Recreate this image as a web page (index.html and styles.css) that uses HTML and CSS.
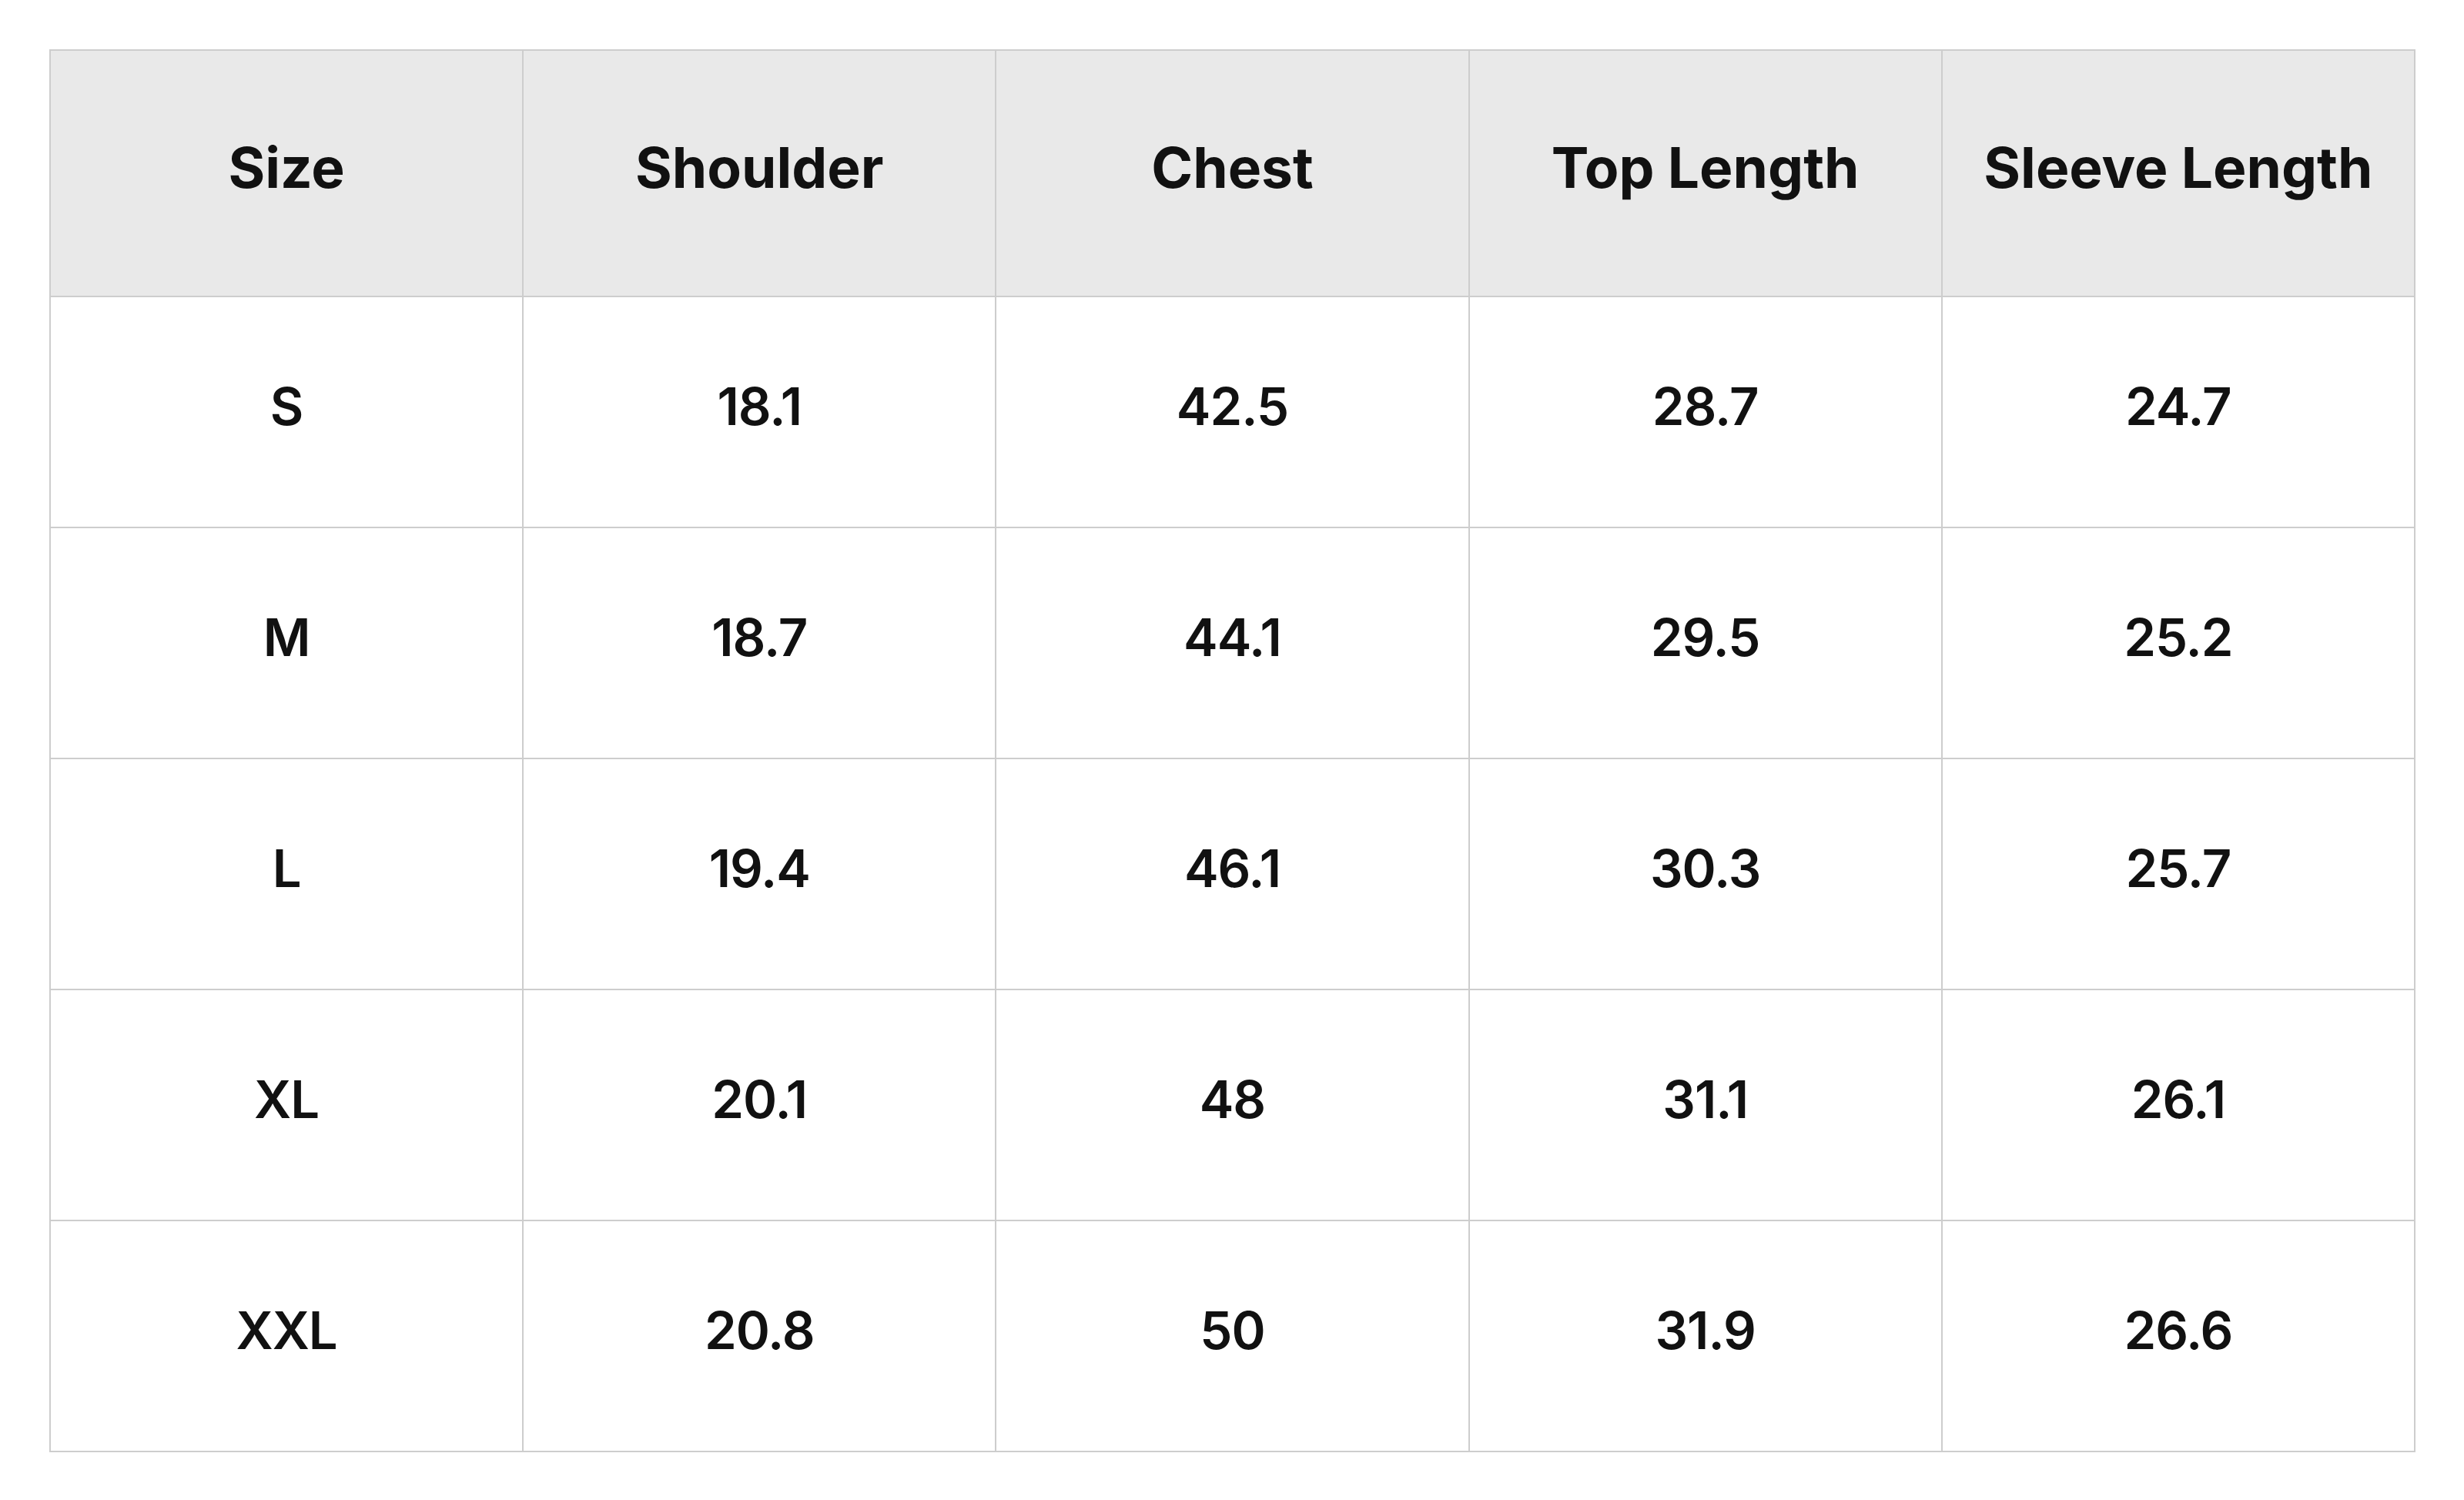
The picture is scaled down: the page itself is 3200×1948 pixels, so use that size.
FILE: index.html
```html
<!DOCTYPE html>
<html lang="en">
<head>
<meta charset="utf-8">
<title>Size Chart</title>
<link rel="stylesheet" href="styles.css">
</head>
<body>
<table class="size-table">
  <thead>
    <tr>
      <th>Size</th>
      <th>Shoulder</th>
      <th>Chest</th>
      <th>Top Length</th>
      <th>Sleeve Length</th>
    </tr>
  </thead>
  <tbody>
    <tr><td>S</td><td>18.1</td><td>42.5</td><td>28.7</td><td>24.7</td></tr>
    <tr><td>M</td><td>18.7</td><td>44.1</td><td>29.5</td><td>25.2</td></tr>
    <tr><td>L</td><td>19.4</td><td>46.1</td><td>30.3</td><td>25.7</td></tr>
    <tr><td>XL</td><td>20.1</td><td>48</td><td>31.1</td><td>26.1</td></tr>
    <tr><td>XXL</td><td>20.8</td><td>50</td><td>31.9</td><td>26.6</td></tr>
  </tbody>
</table>
</body>
</html>
```

FILE: styles.css
```css
html, body {
  margin: 0;
  padding: 0;
  background: #ffffff;
}

body {
  padding: 64px;
  font-family: "Inter", "Liberation Sans", sans-serif;
  color: #111111;
}

.size-table {
  width: 3073px;
  border-collapse: collapse;
  table-layout: fixed;
}

.size-table th,
.size-table td {
  border: 2px solid #cdcdcd;
  text-align: center;
  vertical-align: middle;
}

.size-table th {
  background: #e9e9e9;
  height: 302px;
  padding: 0 0 16px;
  font-size: 73px;
  font-weight: 700;
  letter-spacing: 0;
}

.size-table td {
  height: 282px;
  padding: 0 0 16px;
  font-size: 67px;
  font-weight: 600;
  letter-spacing: -1px;
}
```
